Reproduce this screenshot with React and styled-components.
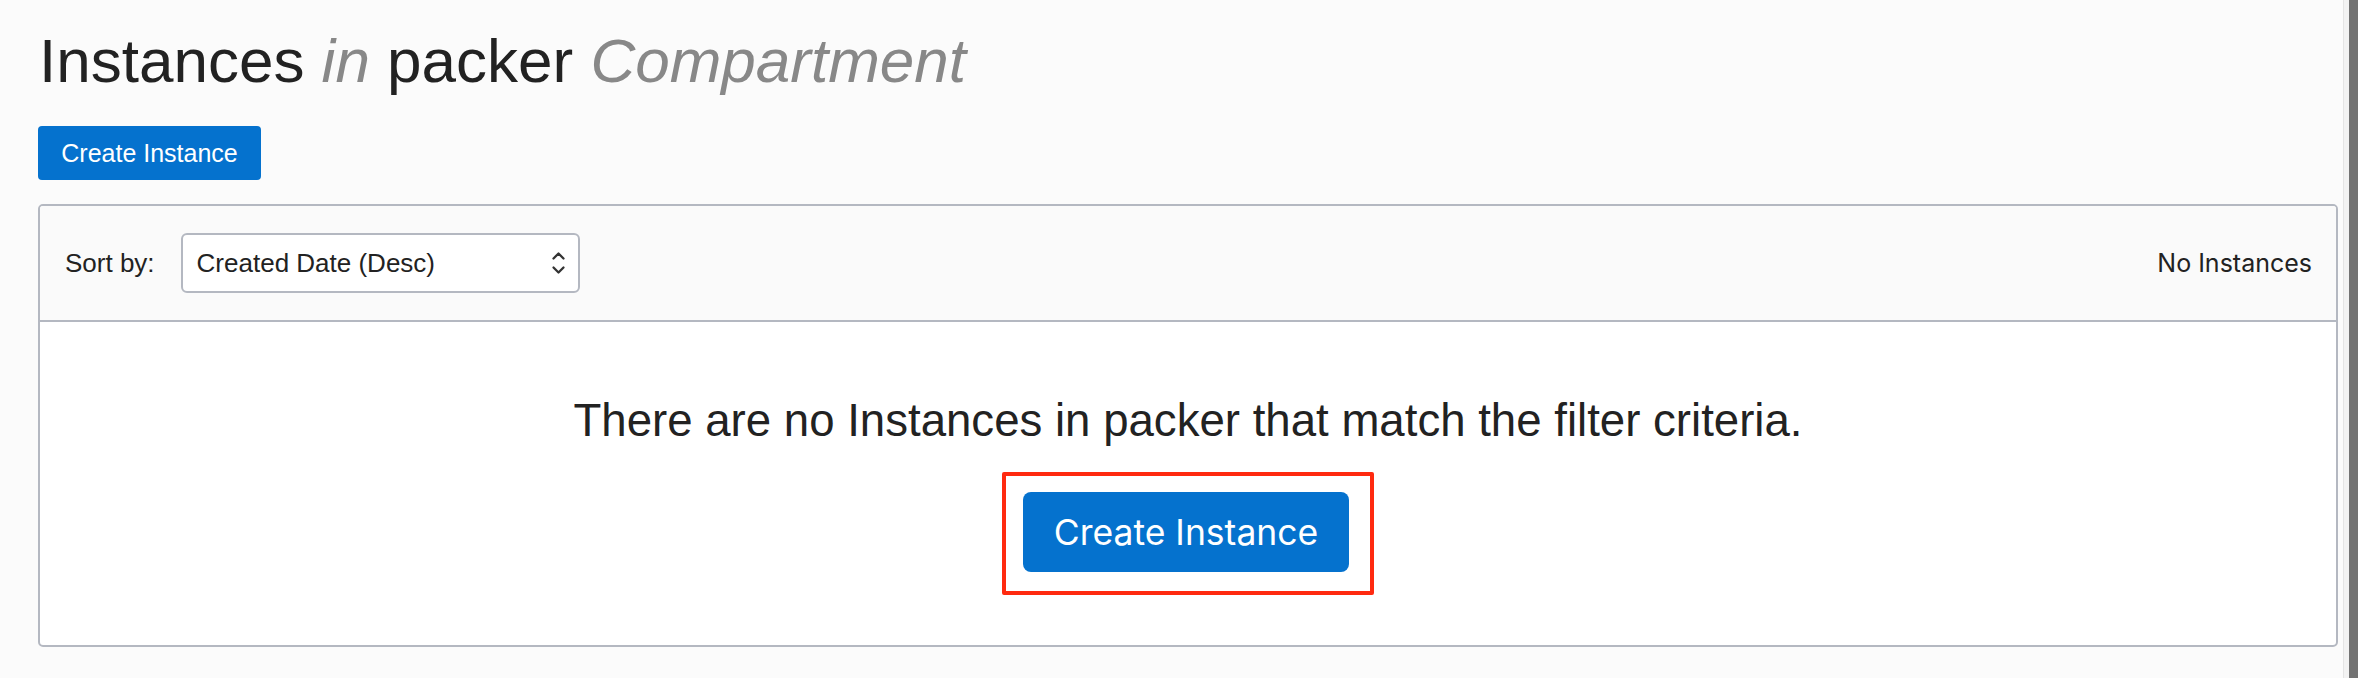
import React from "react";
import styled, { createGlobalStyle } from "styled-components";

const GlobalStyle = createGlobalStyle`
  html, body {
    margin: 0;
    padding: 0;
    background: #fbfbfb;
  }
  body {
    font-family: "Liberation Sans", Arial, sans-serif;
    color: #222;
  }
`;

function Chevrons() {
  return (
    <svg width="15" height="24" viewBox="0 0 15 24" fill="none">
      <path d="M2.5 7.5 L7.5 2.5 L12.5 7.5" stroke="#333" strokeWidth="2.3" strokeLinecap="round" strokeLinejoin="round" />
      <path d="M2.5 16.5 L7.5 21.5 L12.5 16.5" stroke="#333" strokeWidth="2.3" strokeLinecap="round" strokeLinejoin="round" />
    </svg>
  );
}

function App() {
  return (
    <>
      <GlobalStyle />
      <Frame>
        <Main>
          <Title>
            Instances <em>in</em> packer <em>Compartment</em>
          </Title>
          <Button>Create Instance</Button>
          <Card>
            <CardHeader>
              <SortGroup>
                <SortLabel>Sort by:</SortLabel>
                <Select>
                  <span>Created Date (Desc)</span>
                  <Chevrons />
                </Select>
              </SortGroup>
              <Count>No Instances</Count>
            </CardHeader>
            <CardBody>
              <Message>There are no Instances in packer that match the filter criteria.</Message>
              <Highlight>
                <Button $large>Create Instance</Button>
              </Highlight>
            </CardBody>
          </Card>
        </Main>
        <Scrollbar>
          <div className="thumb"></div>
        </Scrollbar>
      </Frame>
    </>
  );
}

const Frame = styled.div`
  display: flex;
  width: 2358px;
  height: 678px;
  overflow: hidden;
`;

const Main = styled.main`
  flex: 1;
  display: flex;
  flex-direction: column;
  align-items: flex-start;
  padding: 26px 5px 0 38px;
  min-width: 0;
`;

const Title = styled.h1`
  margin: 0 0 30px 1px;
  font-size: 62px;
  line-height: 70px;
  font-weight: 400;
  color: #222;
  white-space: nowrap;
  em {
    color: #888;
    font-style: italic;
  }
`;

const Button = styled.button`
  border: none;
  background: #0572ce;
  color: #fff;
  cursor: pointer;
  white-space: nowrap;
  font-family: ${(p) => (p.$large ? `Inter, "Liberation Sans", sans-serif` : `"Liberation Sans", Arial, sans-serif`)};
  font-size: ${(p) => (p.$large ? "35.5px" : "25px")};
  height: ${(p) => (p.$large ? "80px" : "54px")};
  padding: 0;
  border-radius: ${(p) => (p.$large ? "8px" : "4px")};
  display: flex;
  align-items: center;
  justify-content: center;
  width: ${(p) => (p.$large ? "326px" : "223px")};
`;

const Card = styled.section`
  align-self: stretch;
  margin-top: 24px;
  border: 2px solid #b4b8c1;
  border-radius: 5px;
  overflow: hidden;
  background: #fff;
`;

const CardHeader = styled.div`
  display: flex;
  align-items: center;
  justify-content: space-between;
  padding: 27px 24px 27px 25px;
  background: #fafafa;
  border-bottom: 2px solid #b4b8c1;
`;

const SortGroup = styled.div`
  display: flex;
  align-items: center;
  gap: 26px;
`;

const SortLabel = styled.span`
  font-size: 26px;
  color: #222;
`;

const Select = styled.div`
  box-sizing: border-box;
  width: 399px;
  height: 60px;
  display: flex;
  align-items: center;
  justify-content: space-between;
  padding: 0 12px 0 14px;
  border: 2px solid #b4b8c1;
  border-radius: 6px;
  background: #fff;
  font-size: 26px;
  color: #222;
`;

const Count = styled.span`
  font-family: Inter, "Liberation Sans", sans-serif;
  font-size: 25px;
  color: #222;
`;

const CardBody = styled.div`
  display: flex;
  flex-direction: column;
  align-items: center;
  padding: 73px 0 50px;
`;

const Message = styled.p`
  margin: 0;
  font-size: 45.6px;
  line-height: 52px;
  color: #222;
  white-space: nowrap;
`;

const Highlight = styled.div`
  margin-top: 25px;
  padding: 16px 21px 19px 17px;
  border: 4px solid #ff2a10;
  border-radius: 2px;
`;

const Scrollbar = styled.div`
  width: 14px;
  flex: none;
  display: flex;
  border-left: 1px solid #e4e4e4;
  background: #f2f2f2;
  .thumb {
    margin-left: 5px;
    flex: 1;
    background: #737373;
  }
`;

export default App;
